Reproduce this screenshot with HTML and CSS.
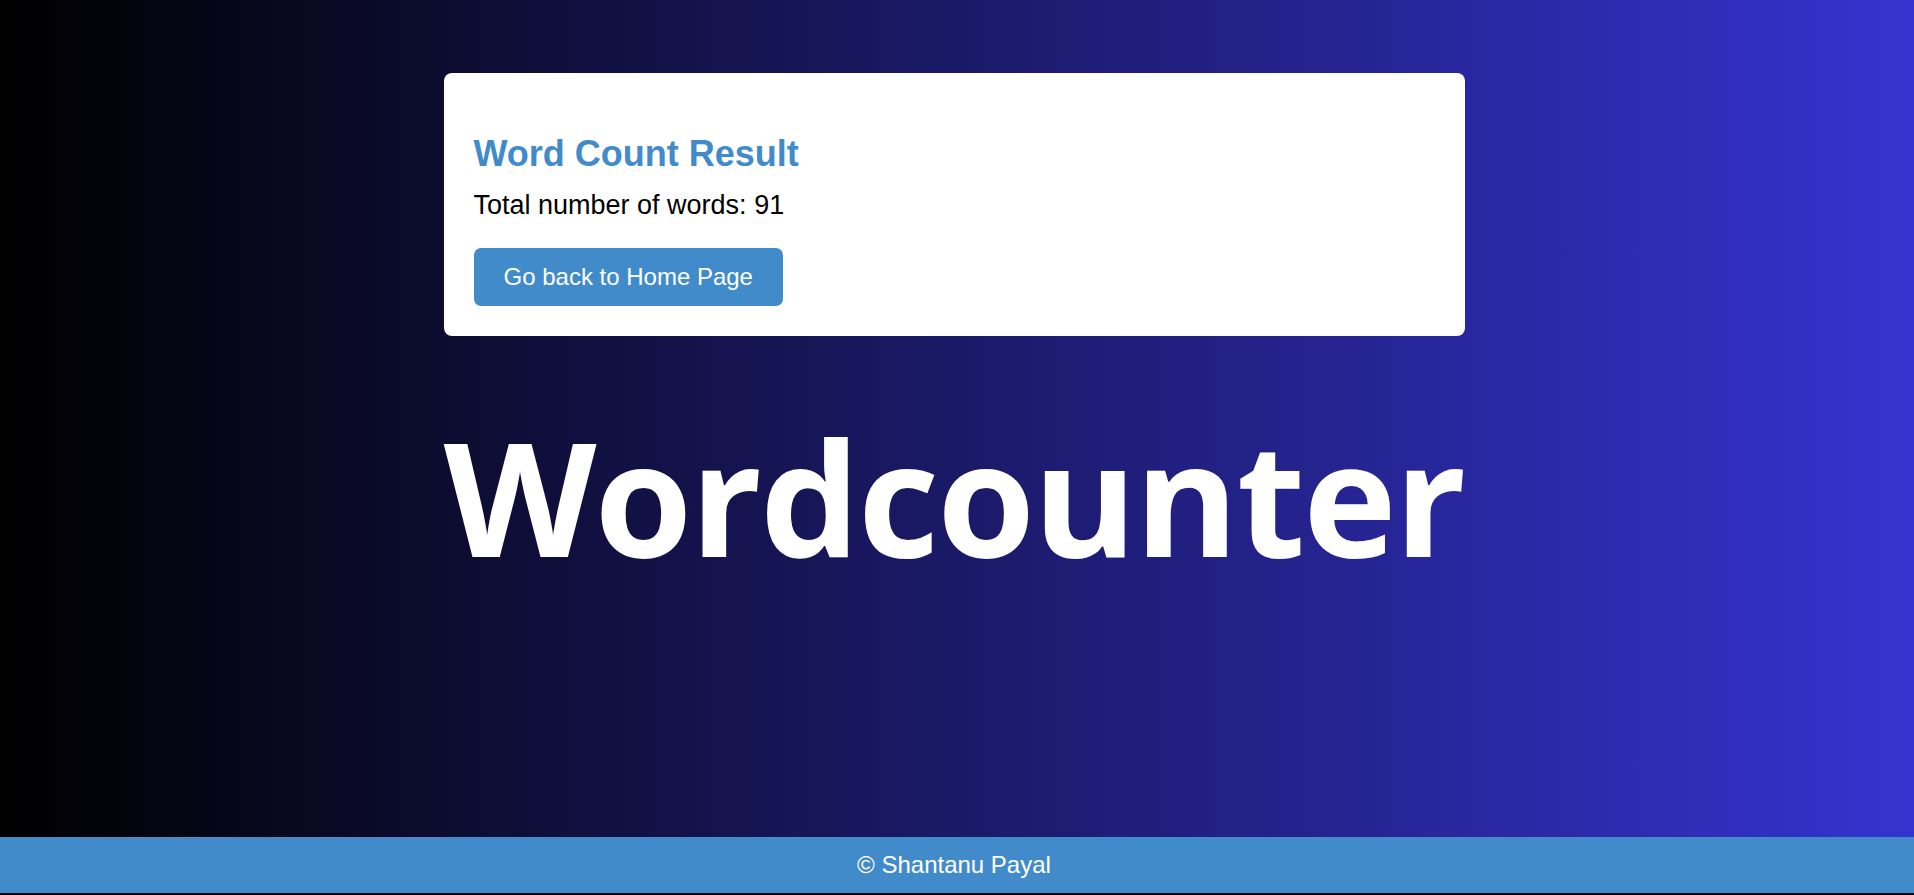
FILE: index.html
```html
<!DOCTYPE html>
<html lang="en">
<head>
<meta charset="utf-8">
<title>Word Count Result</title>
<link rel="stylesheet" href="styles.css">
</head>
<body>
<div class="page">
  <main class="content">
    <section class="card">
      <h2 class="card-title">Word Count Result</h2>
      <p class="card-text">Total number of words: 91</p>
      <a class="btn" href="#">Go back to Home Page</a>
    </section>
    <div class="logo">Wordcounter</div>
  </main>
  <footer class="footer">© Shantanu Payal</footer>
</div>
</body>
</html>
```
FILE: styles.css
```css
html, body {
  margin: 0;
  padding: 0;
  background: #000;
}
body {
  font-family: "Liberation Sans", Arial, sans-serif;
}
.page {
  height: 893px;
  display: flex;
  flex-direction: column;
}
.content {
  flex: 1;
  background: linear-gradient(to right, #000000, #3533cf);
  display: flex;
  flex-direction: column;
  align-items: center;
  padding-top: 73px;
  box-sizing: border-box;
}
.card {
  width: 1021px;
  box-sizing: border-box;
  background: #fff;
  border-radius: 8px;
  padding: 30px;
  margin-right: 6px;
}
.card-title {
  margin: 30px 0 15px;
  font-size: 36px;
  font-weight: bold;
  color: #428bca;
  line-height: normal;
}
.card-text {
  margin: 0 0 27px;
  font-size: 27px;
  color: #000;
}
.btn {
  display: inline-block;
  background: #428bca;
  color: #fff;
  text-decoration: none;
  font-size: 24px;
  padding: 15px 30px;
  border-radius: 7px;
}
.logo {
  margin-top: 81px;
  margin-right: 6px;
  font-family: "Open Sans", sans-serif;
  font-weight: 700;
  font-size: 158px;
  line-height: 158px;
  letter-spacing: -2px;
  color: #fff;
}
.footer {
  height: 56px;
  background: #428bca;
  color: #fff;
  font-size: 24px;
  display: flex;
  align-items: center;
  justify-content: center;
  padding-right: 6px;
}
```
